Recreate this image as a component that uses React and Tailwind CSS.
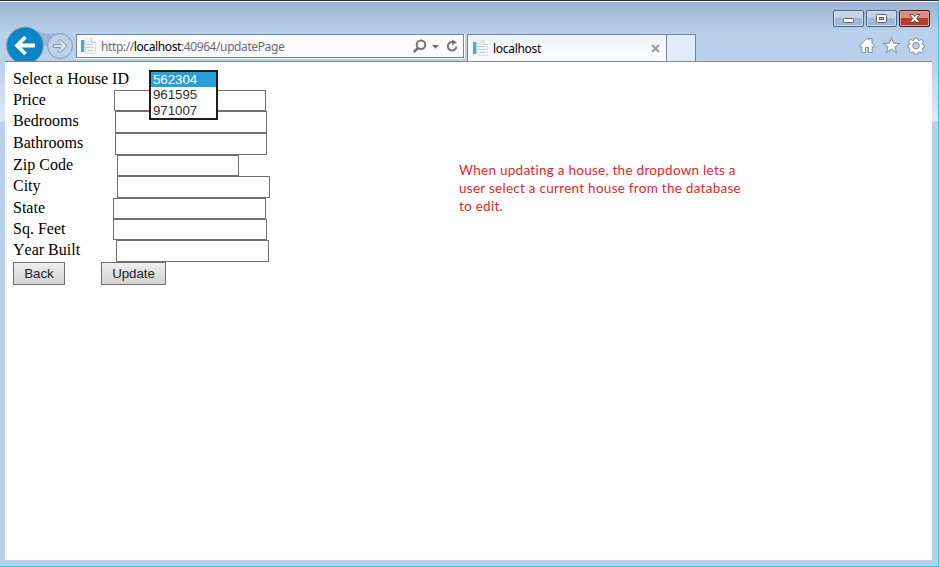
import React from "react";

const fields = [
  { label: "Price", row: "h-[21px]", box: "ml-[101px] w-[152px]" },
  { label: "Bedrooms", row: "h-[22px]", box: "ml-[102px] w-[152px]" },
  { label: "Bathrooms", row: "h-[22px]", box: "ml-[102px] w-[152px]" },
  { label: "Zip Code", row: "h-[21px]", box: "ml-[104px] w-[122px]" },
  { label: "City", row: "h-[22px]", box: "ml-[104px] w-[153px]" },
  { label: "State", row: "h-[21px]", box: "ml-[100px] w-[153px]" },
  { label: "Sq. Feet", row: "h-[21px]", box: "ml-[100px] w-[154px]" },
  { label: "Year Built", row: "h-[22px]", box: "ml-[103px] w-[153px]" },
];

function PageIcon() {
  return (
    <svg width="16" height="16" viewBox="0 0 16 16" className="shrink-0">
      <path d="M4.5 .5h6l4 4v11h-10z" fill="#f3f5f7" stroke="#dde2e8" />
      <path d="M10.5 .5v4h4" fill="#fff" stroke="#c5cbd3" />
      <path d="M5 6.5h7M5 9.5h8M7 12.5h5" stroke="#c3cad2" />
      <path d="M5 3.5h4" stroke="#d5dae0" />
      <rect x="0" y="2" width="3" height="12" fill="#4aa5d8" />
      <rect x="3" y="2" width="1" height="12" fill="#b9dcf0" />
    </svg>
  );
}

function NavButtons() {
  return (
    <svg width="71" height="36" viewBox="5 25 71 36" className="shrink-0">
      <path d="M25 27.5C35 27.5 38 33.5 49 33.5L60 33.5L48 46H25z" fill="#9fb5d0" />
      <circle cx="25" cy="45.500" r="18.2" fill="#0a85c7" stroke="#7d8ba0" />
      <path d="M35 45.500H17.5M25.500 37L17 45.500l8.500 8.500" fill="none" stroke="#fff" strokeWidth="3.8" />
      <circle cx="60" cy="46" r="12.500" fill="#bdd0e8" stroke="#8497b0" />
      <path d="M53.500 44.500H61L57.800 41.300L60 39.400L67 46L60 52.700L57.800 50.700L61 47.500H53.500z" fill="#d3e0f1" stroke="#8494aa" />
    </svg>
  );
}

function AddressIcons() {
  return (
    <svg width="48" height="18" viewBox="412 37 48 18" className="shrink-0" fill="none" stroke="#747474">
      <circle cx="421" cy="44.700" r="4.300" strokeWidth="2" />
      <path d="M418 48l-4.200 4" strokeWidth="2.600" />
      <path d="M432 45h7l-3.500 3.800z" fill="#747474" stroke="none" />
      <path d="M453.500 42.200A4.300 4.300 0 1 0 456.400 46.500" strokeWidth="2" />
      <path d="M452 39.500l4.800 2.700-4.500 3.300z" fill="#747474" stroke="none" />
    </svg>
  );
}

function ToolIcons() {
  return (
    <svg width="74" height="20" viewBox="857 36 74 20" className="mr-px mt-[9px] self-end" fill="#fff" stroke="#7c8ba0">
      <path d="M859.500 46l7.500-7.700 2 2v-1.800h3v4.700l2.600 2.800-1.400 1.300-1-.9v6.100h-3.700v-5h-3v5h-3.700v-6.100l-1 .9z" />
      <path d="M891.500 37.700l2.100 5.500 6 .2-4.700 3.700 1.700 5.500-5.100-3.400-5.100 3.400 1.700-5.500-4.700-3.700 6-.2z" />
      <path d="M914.500 38h3.200l.4 2.100 1.300.5 1.900-1.300 2.200 2.200-1.300 1.900.5 1.300 1.700.3v.7l-.1 1.700-1.600.5-.5 1.300 1.300 1.700-2.300 2.200-1.800-1.200-1.300.5-.4 1.900h-3.200l-.4-1.900-1.300-.5-1.800 1.200-2.300-2.200 1.300-1.700-.5-1.300-1.600-.5v-2.400l1.600-.3.500-1.300-1.300-1.900 2.200-2.200 1.900 1.300 1.300-.5z" />
      <circle cx="916" cy="45.600" r="3.300" fill="#b9cfe8" />
    </svg>
  );
}

function WindowButtons() {
  return (
    <div className="flex gap-[2px] self-end pr-[2px]">
      <div className="flex h-[17px] w-[31px] rounded-[2px] border border-[#4f6484] bg-gradient-to-b from-[#c3d4e7] from-50% to-[#9db9d7] to-50% shadow-[inset_0_0_0_1px_#cfdeef]">
        <svg width="29" height="15"><rect x="9.500" y="7.500" width="10" height="4" rx="1" fill="#fff" stroke="#59606d" /></svg>
      </div>
      <div className="flex h-[17px] w-[31px] rounded-[2px] border border-[#4f6484] bg-gradient-to-b from-[#c3d4e7] from-50% to-[#9db9d7] to-50% shadow-[inset_0_0_0_1px_#cfdeef]">
        <svg width="29" height="15"><rect x="9.500" y="3.500" width="10" height="8" rx="1" fill="#fff" stroke="#59606d" /><rect x="12.500" y="6.500" width="4" height="2" fill="#a9c0da" stroke="#59606d" /></svg>
      </div>
      <div className="flex h-[17px] w-[31px] rounded-[2px] border border-[#551720] bg-gradient-to-b from-[#d98f80] from-45% to-[#bc3d25] to-45% shadow-[inset_0_0_0_1px_#dda195]">
        <svg width="29" height="15"><path d="M9.500 3.500h3.500l1.700 2 1.800-2H20l-3.300 4 3.300 4h-3.500l-1.800-2-1.700 2H9.500l3.300-4z" fill="#fff" stroke="#59494f" /></svg>
      </div>
    </div>
  );
}

export default function App() {
  return (
    <div className="flex h-[567px] w-[939px] flex-col overflow-hidden border-b border-r border-t border-b-[#2bc9df] border-r-[#2bc9df] border-t-[#30303a] bg-[#b9d0ea] font-['Liberation_Serif',serif]">
      <header className="flex h-[61px] shrink-0 items-end border-t border-white bg-gradient-to-b from-[#9bb3d1] from-0% to-[#b9d0ea] to-50% pl-[5px] pr-[6px] font-['Noto_Sans',sans-serif] text-[12px]">
        <div className="flex h-full flex-1 items-end border-b border-[#778aa4]">
          <NavButtons />
          <div className="mb-[2px] h-[25px] w-[389px] border-b border-r border-white">
            <div className="flex h-[24px] w-[388px] items-center border border-[#72839b] bg-[#f8fafd] pl-[4px] pr-[3px]">
              <PageIcon />
              <span className="ml-[4px] whitespace-nowrap pt-[2px] tracking-[-0.4px] text-[#6d6d6d]">
                http://<span className="text-black">localhost</span>:40964/updatePage
              </span>
              <span className="flex-1" />
              <AddressIcons />
            </div>
          </div>
          <div className="ml-[2px] flex h-[27px] w-[200px] items-center border border-b-0 border-[#72839b] bg-gradient-to-b from-[#eaf2fb] to-white pl-[5px] pr-[6px]">
            <PageIcon />
            <span className="ml-[4px] pt-[2px] tracking-[-0.3px] text-black">localhost</span>
            <svg width="9" height="9" className="ml-auto"><path d="M1 1l7 7M8 1l-7 7" stroke="#999" strokeWidth="1.800" /></svg>
          </div>
          <div className="h-[27px] w-[29px] border-r border-t border-[#72839b] bg-[#e0ecf9]" />
          <div className="ml-auto flex h-full flex-col pt-[8px]">
            <WindowButtons />
            <ToolIcons />
          </div>
        </div>
      </header>

      <div className="flex h-[504px] shrink-0 bg-gradient-to-b from-[#b9d0ea] from-0% via-[#deebf8] via-[59px] to-[#b9d0ea] to-[60px] pb-[6px] pl-[5px] pr-[6px]">
        <main className="relative flex flex-1 bg-white pl-[8px]">
          <form className="w-[270px] shrink-0 pt-[6px] text-[16px] text-black" onSubmit={(e) => e.preventDefault()}>
            <div className="relative flex h-[22px] items-center whitespace-nowrap">
              <label>Select a House ID</label>
              <div className="absolute left-[136px] top-[2px] z-10 flex h-[50px] w-[69px] flex-col border-2 border-[#1d1d1f] bg-white font-['Liberation_Sans',sans-serif] text-[13.33px] leading-[16px] tracking-[-0.05px] text-[#303030]">
                <div className="h-[15px] bg-[#269fda] pl-[2px] text-white">562304</div>
                <div className="h-[16px] pl-[2px]">961595</div>
                <div className="h-[15px] pl-[2px]">971007</div>
              </div>
            </div>
            {fields.map((f) => (
              <div key={f.label} className={`flex items-center ${f.row}`}>
                <label className="w-0 whitespace-nowrap pb-[2px] leading-[20px] [font-kerning:none]">{f.label}</label>
                <input className={`h-full border border-[#707070] bg-white ${f.box}`} />
              </div>
            ))}
            <div className="flex gap-[36px] font-['Liberation_Sans',sans-serif] text-[13.33px] tracking-[-0.05px] text-[#222]">
              <button className="h-[23px] w-[52px] border border-[#707070] bg-gradient-to-b from-[#eeeeee] to-[#d2d2d2]">Back</button>
              <button className="h-[23px] w-[65px] border border-[#707070] bg-gradient-to-b from-[#eeeeee] to-[#d2d2d2]">Update</button>
            </div>
          </form>
          <p className="ml-[176px] mt-[99px] whitespace-nowrap font-[Lato,sans-serif] text-[13.5px] leading-[18px] tracking-[0.27px] text-[#ed1c24]">
            When updating a house, the dropdown lets a
            <br />
            user select a current house from the database
            <br />
            to edit.
          </p>
        </main>
      </div>
    </div>
  );
}
